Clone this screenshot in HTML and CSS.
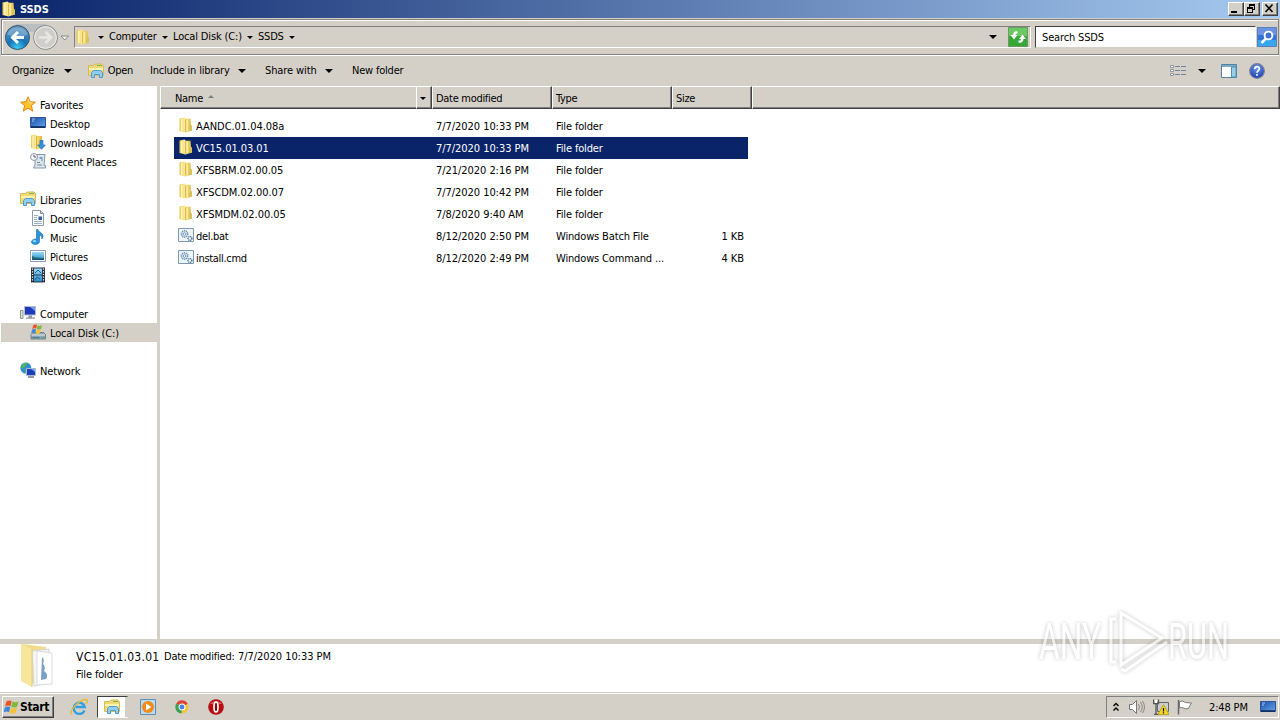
FILE: index.html
```
<!DOCTYPE html>
<html lang="en">
<head>
    <meta charset="UTF-8">
    <meta name="viewport" content="width=device-width, initial-scale=1.0">
    <title>SSDS</title>
    <link rel="stylesheet" href="styles.css">
</head>
<body>
    <svg class="defs" width="0" height="0">
        <defs>
            <linearGradient id="gold" x1="0" x2="1" y1="0" y2="0">
                <stop offset="0" stop-color="#e9c95a"/>
                <stop offset=".4" stop-color="#fbe992"/>
                <stop offset="1" stop-color="#dfb640"/>
            </linearGradient>
            <linearGradient id="screen" x1="0" x2="1" y1="0" y2="1">
                <stop offset="0" stop-color="#1c4fa8"/>
                <stop offset="1" stop-color="#64a5ec"/>
            </linearGradient>
            <linearGradient id="sky" x1="0" x2="0" y1="0" y2="1">
                <stop offset="0" stop-color="#9adcf8"/>
                <stop offset="1" stop-color="#2a8cc8"/>
            </linearGradient>
            <radialGradient id="back" cx=".5" cy=".95" r=".9">
                <stop offset="0" stop-color="#3fd0f5"/>
                <stop offset=".45" stop-color="#1673b4"/>
                <stop offset="1" stop-color="#5f93bd"/>
            </radialGradient>
            <radialGradient id="help" cx=".5" cy=".3" r=".7">
                <stop offset="0" stop-color="#6f9bec"/>
                <stop offset="1" stop-color="#1b3cab"/>
            </radialGradient>
        </defs>
        <symbol id="folder" viewBox="0 0 16 16">
            <path d="M1.500 1.500l5-1 1.500 1.300h4.500l.5 6 1 1v4.700L7.500 15.500l-6-1.500z" fill="url(#gold)"/>
            <path d="M3.800 2v12" stroke="#fff6bd" stroke-width="1.500"/>
            <path d="M7.500 2.500v12" stroke="#d0a63a" stroke-width=".7"/>
            <path d="M9.300 3v11" stroke="#faeca0" stroke-width="1.500"/>
            <path d="M11 9.500l3-.7v4.700l-3 .8z" fill="#d6c35c"/>
        </symbol>
        <symbol id="library" viewBox="0 0 16 16">
            <path d="M.5 2.500h5l1.500-1.500h7l1.500 2v9.500H.5z" fill="#f3d971" stroke="#d9b95a"/>
            <path d="M1 5h14v2H1z" fill="#fff3b4"/>
            <path d="M9 2.500h5" stroke="#6bbd5b"/>
            <path d="M3.500 14.500V9.500l2-2h7l2 2v5h-3v-3h-5v3z" fill="#8fcdf2" stroke="#4f9dd0"/>
        </symbol>
        <symbol id="star" viewBox="0 0 16 16">
            <path d="M8 .8l2.100 5 5.300.4-4 3.500 1.300 5.400L8 12.200l-4.700 2.900 1.300-5.400-4-3.500 5.300-.4z" fill="#ffc32e" stroke="#e48312"/>
            <path d="M8 3l1.300 3.800 3.200.3" fill="none" stroke="#ffe898"/>
        </symbol>
        <symbol id="desktop" viewBox="0 0 16 16">
            <path d="M.5 2.500h15v10H.5z" fill="url(#screen)" stroke="#2d5596"/>
            <path d="M1 12h14" stroke="#0b2453" stroke-width="1.500"/>
            <path d="M2 4h3M2 6h2" stroke="#a8c9f3"/>
        </symbol>
        <symbol id="downloads" viewBox="0 0 16 16">
            <path d="M1 1.500l5-1 1 1.500h5v12L6 15.500 1 14z" fill="url(#gold)"/>
            <path d="M3 2v12" stroke="#fff6bd" stroke-width="1.300"/>
            <path d="M6.500 2v12.500" stroke="#d0a63a" stroke-width=".8"/>
            <path d="M10 6.500h3V11h2.300l-3.800 4.300L7.700 11H10z" fill="#3596df" stroke="#166ab0" stroke-width=".7"/>
        </symbol>
        <symbol id="recent" viewBox="0 0 16 16">
            <path d="M5 1.500h10l-1 11h1.500v2.500H3.500L5 12z" fill="#dfe6eb" stroke="#8798a8"/>
            <path d="M7 9.500h3M7 12h5M11 7h2" stroke="#6a88a5"/>
            <path d="M9.500 4h3v2h-3z" fill="#6aa0cb"/>
            <circle cx="4" cy="4" r="3.500" fill="#f6f8fa" stroke="#8899aa"/>
            <path d="M4 2v2h2" fill="none" stroke="#556"/>
        </symbol>
        <symbol id="documents" viewBox="0 0 16 16">
            <path d="M2.500.5h8l3 3v12h-11z" fill="#fbfdff" stroke="#8d9aa8"/>
            <path d="M10.500.5v3h3" fill="#ccd8e2" stroke="#7f8d9c"/>
            <path d="M4 5.500h4M4 7.500h3M4 9.500h3M4 11.500h8M4 13.500h8" stroke="#9db0c6"/>
            <path d="M8.500 6.500H12V10H8.500z" fill="#345c9c"/>
        </symbol>
        <symbol id="music" viewBox="0 0 16 16">
            <path d="M8 .5c.5 3 5 3 5 6.500 0 1.500-.6 2.500-1.200 3 .4-2.500-1-3.600-2.300-4v6.500c0 2-2 3-4.300 3C3 15.500 1.500 14.500 1.500 13c0-2 2.500-3.500 5-3V.5z" fill="#2994d8" stroke="#176fae" stroke-width=".6"/>
            <ellipse cx="4.500" cy="12.200" rx="1.800" ry="1.100" fill="#8fd3f6"/>
        </symbol>
        <symbol id="pictures" viewBox="0 0 16 16">
            <path d="M.5 2.500h15v11H.5z" fill="#fff" stroke="#8e9ba8"/>
            <path d="M2 4h12v8H2z" fill="url(#sky)"/>
            <path d="M2 8l4 1.500 8 .5v2H2z" fill="#1e6d70"/>
            <path d="M2 11h12v1H2z" fill="#124a86"/>
        </symbol>
        <symbol id="videos" viewBox="0 0 16 16">
            <path d="M1 .5h14v15H1z" fill="#26303c"/>
            <path d="M4 1.500h8v6H4zM4 8.500h8v6H4z" fill="url(#sky)"/>
            <path d="M2.500 1.500v14M13.500 1.500v14" stroke="#fff" stroke-width="1.200" stroke-dasharray="1.200 1.500"/>
            <path d="M5 6l3-3 3 3M5 13l2-3 3 2" fill="none" stroke="#1f5d94"/>
        </symbol>
        <symbol id="computer" viewBox="0 0 16 16">
            <path d="M.5 5.500h2.500v8H.5z" fill="#dde1de" stroke="#8f9891"/>
            <path d="M4.500 1.500h11v8.500h-11z" fill="#1c38bb" stroke="#b3bccb"/>
            <path d="M10 2h5v4z" fill="#7794f3"/>
            <path d="M8.500 10.500h3.500v2H15v1.300H6v-1.300h2.500z" fill="#8c96a5"/>
        </symbol>
        <symbol id="flag" viewBox="0 0 16 16">
            <path d="M2.500 2.500C4.500 1 6 1.200 7.700 2.200L6.500 7.200C4.800 6.200 3.200 6.300 1 7.500z" fill="#ea5425"/>
            <path d="M8.600 2.600c2 1 3.800 1 6-.3l-1.400 5.200c-2 1.200-4 1.200-5.900.200z" fill="#7cb83a"/>
            <path d="M.8 8.500c2-1.200 3.800-1.300 5.500-.300l-1.300 5c-1.800-1-3.300-.900-5.400.300z" fill="#3c88d6"/>
            <path d="M7.100 8.700c2 1 3.900.900 6-.300l-1.400 5.100c-2 1.300-4 1.200-5.900.200z" fill="#f9c22d"/>
        </symbol>
        <symbol id="disk" viewBox="0 0 16 16">
            <path d="M1 10.500l2-2h10.500l2 2v4.500H1z" fill="#8fa5b3" stroke="#61727e" stroke-width=".8"/>
            <path d="M1.500 11h13.500" stroke="#e7eef2"/>
            <path d="M12.500 13.500h2" stroke="#45b04a"/>
            <path d="M2.500 13.500h7" stroke="#3f7f9d"/>
            <use href="#flag" x="1" y="-.5" width="12.500" height="11.500"/>
        </symbol>
        <symbol id="network" viewBox="0 0 16 16">
            <circle cx="5.800" cy="6" r="5.500" fill="#2f8fd2"/>
            <path d="M2 3c2-2.500 5-2.500 6-2-1 1.500-2 1-2.500 3L3 6.500 1 6zM5 7l3 1-1 3.200-2-.5z" fill="#54b64e"/>
            <path d="M6.500 6.500h9v7h-9z" fill="#1b3fb8" stroke="#a9bcd4"/>
            <path d="M11 7h4v3z" fill="#7fa2f3"/>
            <path d="M8 15h6" stroke="#6e7b8b" stroke-width="1.500"/>
        </symbol>
        <symbol id="batch" viewBox="0 0 16 16">
            <path d="M.5 1.500h15v13H.5z" fill="#eff6fb" stroke="#7d98b0"/>
            <circle cx="6.500" cy="7" r="3.200" fill="#dfeaf3" stroke="#6c94b8" stroke-width="1.500" stroke-dasharray="1.300 .7"/>
            <circle cx="6.500" cy="7" r="1.300" fill="#fff" stroke="#5c87ad" stroke-width=".8"/>
            <circle cx="12" cy="11.500" r="1.900" fill="#fff" stroke="#426e9a" stroke-width="1.400" stroke-dasharray="1.100 .5"/>
        </symbol>
    </svg>

    <div class="titlebar">
        <svg class="icon"><use href="#folder"/></svg>
        <span class="title">SSDS</span>
        <div class="window-buttons">
            <div class="wbtn"><svg viewBox="0 0 12 11"><path d="M2 8h6v2H2z"/></svg></div>
            <div class="wbtn"><svg viewBox="0 0 12 11"><path d="M4 1h6v2H4zM4 3h1v1H4zM9 3h1v4H8V6h1zM2 4h6v2H2zM2 6h1v4H2zM7 6h1v4H7zM2 9h6v1H2z"/></svg></div>
            <div class="wbtn close"><svg viewBox="0 0 12 11"><path d="M2.500 1.500l7 7.500M9.500 1.500l-7 7.500" stroke="#000" stroke-width="1.700"/></svg></div>
        </div>
    </div>

    <div class="navbar">
        <svg class="nav-buttons" viewBox="0 0 70 30" width="70" height="30">
            <path d="M14 3h30v8H14z" fill="#b9bec1"/>
            <circle cx="15.500" cy="16.500" r="12" fill="url(#back)" stroke="#39546c"/>
            <path d="M5 13.500a11 10 0 0 1 21 0q-10 5-21 0z" fill="#fff" opacity=".25"/>
            <path d="M22 16.500H11.500M16 11l-5.500 5.500L16 22" fill="none" stroke="#fff" stroke-width="3"/>
            <circle cx="43.500" cy="16.500" r="12" fill="#d0cecb" stroke="#8b8b8b"/>
            <circle cx="43.500" cy="16.500" r="10.800" fill="none" stroke="#efefed"/>
            <path d="M37 16.500h10M43.500 11l5.500 5.500-5.500 5.500" fill="none" stroke="#e9e7e4" stroke-width="2.600"/>
            <path d="M59 15h7.500l-3.700 4z" fill="#f6f5f2" stroke="#888"/>
        </svg>
        <div class="address">
            <svg class="icon"><use href="#folder"/></svg>
            <i class="arrow small first"></i>
            <span class="crumb computer">Computer</span><i class="arrow small"></i>
            <span class="crumb drive">Local Disk (C:)</span><i class="arrow small"></i>
            <span class="crumb here">SSDS</span><i class="arrow small"></i>
            <i class="arrow history"></i>
            <svg class="refresh" viewBox="0 0 20 20" width="20" height="20">
                <path d="M.5.500h19v19H.5z" fill="#35a836" stroke="#6a9a60"/>
                <path d="M1 1h18v8H1z" fill="#6bc865"/>
                <path d="M9.500 4.500q-4-1-4.500 3.500H2.500l3.500 4.500L9.500 8H7.500q0-1.800 2-1.500zM10.500 15.500q4.500 1 5-3.500H18l-3.500-4.500L11 12h2q0 1.800-2.500 1.500z" fill="#fff"/>
            </svg>
        </div>
        <div class="search">Search SSDS</div>
        <svg class="search-button" viewBox="0 0 20 20" width="20" height="20">
            <path d="M.5.500h19v19H.5z" fill="#2f73d8" stroke="#5c7fb8"/>
            <path d="M1 1h18v7H1z" fill="#6d92e4"/>
            <path d="M1 13h18v6H1z" fill="#38a5ee"/>
            <path d="M9 11.500L4.500 16" stroke="#fff" stroke-width="2.500"/>
            <circle cx="11.500" cy="8.500" r="3.900" fill="#3f70cf" stroke="#fff" stroke-width="1.900"/>
        </svg>
    </div>

    <div class="toolbar">
        <div class="tool organize">Organize<i class="arrow"></i></div>
        <div class="tool open"><svg class="icon"><use href="#library"/></svg>Open</div>
        <div class="tool include">Include in library<i class="arrow"></i></div>
        <div class="tool share">Share with<i class="arrow"></i></div>
        <div class="tool new">New folder</div>
        <div class="views">
            <svg viewBox="0 0 16 14" width="16" height="14">
                <path d="M.5 1.500h3v2h-3zM.5 5.500h3v2h-3zM.5 9.500h3v2h-3z" fill="#fff" stroke="#8a93a0"/>
                <path d="M5 2.500h5M11 2.500h5M5 6.500h5M11 6.500h5M5 10.500h5M11 10.500h5" stroke="#71849a"/>
            </svg>
            <i class="arrow"></i>
            <svg class="preview" viewBox="0 0 16 14" width="16" height="14">
                <path d="M.5.500h15v13H.5z" fill="#fff" stroke="#54809f"/>
                <path d="M1 2h14" stroke="#4c93b8" stroke-width="1.500"/>
                <path d="M10.500 3h4.500v10h-4.500z" fill="#9acfe8" stroke="#4c93b8"/>
            </svg>
            <svg class="help" viewBox="0 0 16 16" width="16" height="16">
                <circle cx="8" cy="8" r="7.300" fill="url(#help)" stroke="#76819d" stroke-width="1.200"/>
                <path d="M5.700 6c0-3.200 4.900-3 4.700-.2C10.300 7.500 8 7.700 8 9.800M8 11v1.800" fill="none" stroke="#fff" stroke-width="1.700"/>
            </svg>
        </div>
    </div>

    <div class="content">
        <div class="sidebar">
            <div class="group">
                <div class="node root"><svg class="icon"><use href="#star"/></svg>Favorites</div>
                <div class="node"><svg class="icon"><use href="#desktop"/></svg>Desktop</div>
                <div class="node"><svg class="icon"><use href="#downloads"/></svg>Downloads</div>
                <div class="node"><svg class="icon"><use href="#recent"/></svg>Recent Places</div>
            </div>
            <div class="group">
                <div class="node root"><svg class="icon"><use href="#library"/></svg>Libraries</div>
                <div class="node"><svg class="icon"><use href="#documents"/></svg>Documents</div>
                <div class="node"><svg class="icon"><use href="#music"/></svg>Music</div>
                <div class="node"><svg class="icon"><use href="#pictures"/></svg>Pictures</div>
                <div class="node"><svg class="icon"><use href="#videos"/></svg>Videos</div>
            </div>
            <div class="group">
                <div class="node root"><svg class="icon"><use href="#computer"/></svg>Computer</div>
                <div class="node current"><svg class="icon"><use href="#disk"/></svg>Local Disk (C:)</div>
            </div>
            <div class="group">
                <div class="node root"><svg class="icon"><use href="#network"/></svg>Network</div>
            </div>
        </div>

        <div class="files">
            <div class="columns">
                <div class="col name">Name<i class="sort"></i></div>
                <div class="col drop"><i class="arrow small"></i></div>
                <div class="col">Date modified</div>
                <div class="col">Type</div>
                <div class="col size">Size</div>
                <div class="col rest"></div>
            </div>
            <div class="rows">
                <div class="row"><svg class="icon"><use href="#folder"/></svg><span>AANDC.01.04.08a</span><span>7/7/2020 10:33 PM</span><span class="type">File folder</span></div>
                <div class="row selected"><svg class="icon"><use href="#folder"/></svg><span>VC15.01.03.01</span><span>7/7/2020 10:33 PM</span><span class="type">File folder</span></div>
                <div class="row"><svg class="icon"><use href="#folder"/></svg><span>XFSBRM.02.00.05</span><span>7/21/2020 2:16 PM</span><span class="type">File folder</span></div>
                <div class="row"><svg class="icon"><use href="#folder"/></svg><span>XFSCDM.02.00.07</span><span>7/7/2020 10:42 PM</span><span class="type">File folder</span></div>
                <div class="row"><svg class="icon"><use href="#folder"/></svg><span>XFSMDM.02.00.05</span><span>7/8/2020 9:40 AM</span><span class="type">File folder</span></div>
                <div class="row"><svg class="icon"><use href="#batch"/></svg><span class="file">del.bat</span><span>8/12/2020 2:50 PM</span><span class="type">Windows Batch File</span><span class="kb">1 KB</span></div>
                <div class="row"><svg class="icon"><use href="#batch"/></svg><span class="file">install.cmd</span><span>8/12/2020 2:49 PM</span><span class="type">Windows Command ...</span><span class="kb">4 KB</span></div>
            </div>
        </div>
    </div>

    <div class="details">
        <svg class="big-folder" viewBox="0 0 36 46" width="36" height="46">
            <path d="M3 1l23 3v6L12 43 3 38z" fill="#f0dc8d"/>
            <path d="M12 8l17-2v34l-15 3z" fill="#f4f4f2" stroke="#d3d5d8"/>
            <path d="M17 8l15 2v31l-15 1z" fill="#fff" stroke="#dadcdf"/>
            <path d="M22 14q3 2 1 7 3 3 1 7 5 3 2 8l-5 1z" fill="#7b9fc6"/>
            <path d="M1 0l11 7v37L1 38z" fill="#f8e69c"/>
            <path d="M12 7v37" stroke="#e3ce7f"/>
        </svg>
        <div class="info">
            <div class="line"><span class="picked">VC15.01.03.01</span><span class="label">Date modified:</span><span class="stamp">7/7/2020 10:33 PM</span></div>
            <div class="line kind">File folder</div>
        </div>
    </div>

    <div class="taskbar">
        <div class="start"><svg class="icon"><use href="#flag"/></svg><span>Start</span></div>
        <div class="task">
            <svg viewBox="0 0 18 18" width="18" height="18">
                <path d="M14.500 12.500a5.600 5.600 0 1 1 .3-3.500H5.500" fill="none" stroke="#31a0e2" stroke-width="2.300"/>
                <path d="M1.500 16.500C-1 12 10 1 16.500 1.500c1.500.5.5 3-.5 4.500" fill="none" stroke="#edb92e" stroke-width="1.400"/>
            </svg>
        </div>
        <div class="task active"><svg class="icon"><use href="#library"/></svg></div>
        <div class="task">
            <svg viewBox="0 0 16 16" width="16" height="16">
                <path d="M.5.500h15v15H.5z" fill="#b9dbf2" stroke="#5d8fb8"/>
                <circle cx="8" cy="8" r="6" fill="#f28a18"/>
                <path d="M6 4.500l5.500 3.500L6 11.500z" fill="#fff"/>
            </svg>
        </div>
        <div class="task">
            <svg viewBox="0 0 16 16" width="14" height="14">
                <path d="M8 8L1.500 4A7.500 7.500 0 0 1 14.600 4.500z" fill="#dd4534"/>
                <path d="M8 8l6.600-3.500A7.500 7.500 0 0 1 7.500 15.500z" fill="#f6c52e"/>
                <path d="M8 8l-.5 7.500A7.500 7.500 0 0 1 1.500 4z" fill="#3da352"/>
                <circle cx="8" cy="8" r="3.400" fill="#4284ea" stroke="#fff" stroke-width="1.200"/>
            </svg>
        </div>
        <div class="task">
            <svg viewBox="0 0 16 16" width="16" height="16">
                <circle cx="8" cy="8" r="7.800" fill="#b70d12"/>
                <path d="M2 5a7 6 0 0 1 12 0z" fill="#dd5a55"/>
                <ellipse cx="8" cy="8" rx="2" ry="5" fill="#8d090d" stroke="#fff" stroke-width="1.700"/>
            </svg>
        </div>
        <div class="tray">
            <svg viewBox="0 0 8 10" width="8" height="10"><path d="M1.500 4L4 1.500 6.500 4M1.500 8.500L4 6l2.500 2.500" fill="none" stroke="#000" stroke-width="1.400"/></svg>
            <svg class="sound" viewBox="0 0 16 16" width="16" height="16">
                <path d="M.5 5.500h3l4-4v13l-4-4h-3z" fill="#fff" stroke="#777"/>
                <path d="M9.500 5q2 3 0 6M11.500 3q3.500 5 0 10M13.500 2q4 6 0 12" fill="none" stroke="#888"/>
            </svg>
            <svg class="net" viewBox="0 0 16 16" width="16" height="16">
                <path d="M4.500 3.500h11v9h-11z" fill="#c9ced1" stroke="#666"/>
                <path d="M.5.500v4h5v-4M3 4.500V15M1 15.500h5" fill="none" stroke="#555" stroke-width="1.300"/>
                <path d="M2 1h2v3H2z" fill="#fff"/>
                <path d="M10.500 5.500L16 15.500H5z" fill="#f8d928" stroke="#b6960d" stroke-width=".8"/>
                <path d="M10.500 9v3.500M10.500 13.300v1.300" stroke="#111" stroke-width="1.300"/>
            </svg>
            <svg class="action" viewBox="0 0 16 16" width="16" height="16">
                <path d="M1.500 1v14.500" stroke="#666" stroke-width="1.500"/>
                <path d="M2.500 2.500q3-1.500 6 1l6 .5q-2 3-3 5.500-3 1-5-.5-2-1-4 0z" fill="#fff" stroke="#777"/>
            </svg>
            <span class="clock">2:48 PM</span>
            <svg class="icon"><use href="#desktop"/></svg>
        </div>
    </div>

    <svg class="watermark" viewBox="0 0 210 74" width="210" height="74">
        <g class="mark">
            <text x="9" y="54" textLength="62" lengthAdjust="spacingAndGlyphs">ANY</text>
            <text x="138" y="54" textLength="61" lengthAdjust="spacingAndGlyphs">RUN</text>
            <path d="M91 8v52l41-27zM86 14h-5v43h5M91 64l4 2 42-29"/>
        </g>
    </svg>
</body>
</html>
```
FILE: styles.css
```
* {
    box-sizing: border-box;
}
body {
    margin: 0;
    width: 1280px;
    height: 720px;
    overflow: hidden;
    display: flex;
    flex-direction: column;
    background: #d4d0c8;
    color: #000;
    font-family: "DejaVu Sans Condensed", "DejaVu Sans", sans-serif;
    font-stretch: condensed;
    font-size: 11px;
    letter-spacing: -0.3px;
    line-height: 14px;
    white-space: nowrap;
}
svg {
    display: block;
    flex: none;
}
.defs {
    position: absolute;
}
.icon {
    width: 16px;
    height: 16px;
}
.arrow {
    border: 4px solid transparent;
    border-top-color: #000;
    border-bottom: 0;
    flex: none;
}
.arrow.small {
    border-width: 3px;
    border-bottom: 0;
}

/* title bar */
.titlebar {
    height: 18px;
    display: flex;
    align-items: center;
    padding: 0 2px 0 1px;
    background: linear-gradient(to right, #0a246a, #a6caf0);
    color: #fff;
    font-weight: bold;
}
.title {
    margin-left: 3px;
    padding-top: 2px;
    letter-spacing: -0.1px;
}
.window-buttons {
    margin-left: auto;
    display: flex;
}
.wbtn {
    width: 16px;
    height: 14px;
    background: #d4d0c8;
    border: 1px solid;
    border-color: #fff #404040 #404040 #fff;
    box-shadow: inset -1px -1px #808080;
}
.wbtn svg {
    width: 12px;
    height: 11px;
}
.wbtn.close {
    margin-left: 2px;
}

/* address row */
.navbar {
    height: 36px;
    margin: 1px 1px 0;
    display: flex;
    border: 1px solid #808080;
    box-shadow: inset 1px 1px #fff, 0 1px #fff;
}
.nav-buttons {
    margin-top: 1px;
}
.address {
    width: 957px;
    height: 22px;
    margin: 6px 0 0 2px;
    display: flex;
    align-items: center;
    border: 1px solid;
    border-color: #808080 #fff #fff #808080;
}
.first {
    margin: 0 5px 0 7px;
}
.crumb.computer {
    width: 53px;
    letter-spacing: -0.2px;
}
.crumb.drive {
    width: 74px;
    margin-left: 5px;
    letter-spacing: -0.15px;
}
.crumb.here {
    width: 31px;
    margin-left: 5px;
    letter-spacing: -0.2px;
}
.history {
    margin-left: auto;
}
.refresh {
    margin: 0 2px 0 11px;
}
.search {
    width: 221px;
    height: 22px;
    margin: 6px 1px 0 4px;
    padding: 4px 6px 0;
    background: #fff;
    border: 1px solid;
    border-color: #404040 #fff #d4d0c8 #404040;
    letter-spacing: -0.15px;
}
.search-button {
    margin-top: 7px;
}

/* command bar */
.toolbar {
    height: 31px;
    display: flex;
    align-items: center;
    padding-left: 12px;
}
.tool {
    display: flex;
    align-items: center;
    justify-content: space-between;
}
.organize {
    width: 60px;
}
.open {
    width: 45px;
    margin-left: 16px;
}
.include {
    width: 96px;
    margin-left: 17px;
    letter-spacing: -0.2px;
}
.share {
    width: 68px;
    margin: 0 19px;
    letter-spacing: -0.1px;
}
.new {
    letter-spacing: -0.2px;
}
.views {
    margin-left: auto;
    display: flex;
    align-items: center;
    padding-right: 15px;
}
.views .arrow {
    margin: 0 15px 0 12px;
}
.help {
    margin-left: 12px;
}

/* navigation tree and file list */
.content {
    height: 553px;
    display: flex;
    background: #fff;
}
.sidebar {
    width: 160px;
    padding-top: 9px;
    border-right: 3px solid #d4d0c8;
    letter-spacing: -0.15px;
}
.group {
    margin-bottom: 19px;
}
.node {
    height: 19px;
    display: flex;
    align-items: center;
    gap: 4px;
    margin-left: 1px;
    padding: 2px 0 0 29px;
}
.node .icon {
    margin-top: -4px;
}
.node.root {
    padding-left: 19px;
}
.node.current {
    background: #d4d0c8;
}
.files {
    flex: 1;
}
.columns {
    height: 23px;
    display: flex;
    background: #d4d0c8;
}
.col {
    width: 120px;
    display: flex;
    align-items: center;
    padding: 2px 0 0 3px;
    border: 1px solid;
    border-color: #fff #404040 #404040 #fff;
    box-shadow: inset -1px -1px #808080;
}
.col.name {
    width: 256px;
    padding-left: 14px;
    border-right: 0;
    box-shadow: inset 0 -1px #808080;
}
.col.drop {
    width: 16px;
}
.col.size {
    width: 80px;
}
.col.rest {
    flex: 1;
}
.sort {
    margin: -5px 0 0 5px;
    border: 3px solid transparent;
    border-top: 0;
    border-bottom-color: #808080;
}
.rows {
    width: 574px;
    margin: 6px 0 0 14px;
}
.row {
    height: 22px;
    display: grid;
    grid-template-columns: 18px 240px 120px 120px 68px;
    align-items: center;
    padding: 2px 0 0 4px;
    letter-spacing: -0.05px;
}
.row .icon {
    margin-top: -4px;
}
.row.selected {
    background: #0a246a;
    color: #fff;
}
.row .type {
    letter-spacing: -0.15px;
}
.row .file {
    letter-spacing: -0.3px;
}
.kb {
    text-align: right;
}

/* details pane */
.details {
    height: 54px;
    display: flex;
    background: #fff;
    border-top: 5px solid #d4d0c8;
    border-bottom: 1px solid #d4d0c8;
}
.big-folder {
    margin: -1px 0 0 20px;
}
.info {
    margin: 4px 0 0 20px;
}
.line {
    height: 18px;
    display: flex;
    align-items: center;
}
.picked {
    width: 88px;
    font-size: 12px;
    letter-spacing: 0.25px;
}
.label {
    width: 74px;
    letter-spacing: -0.2px;
}
.stamp {
    letter-spacing: -0.05px;
}
.kind {
    letter-spacing: -0.15px;
}

/* taskbar */
.taskbar {
    height: 27px;
    display: flex;
    align-items: center;
    border-top: 1px solid #fff;
    padding: 0 1px 0 2px;
}
.start {
    width: 52px;
    height: 22px;
    margin-right: 8px;
    display: flex;
    align-items: center;
    padding-left: 1px;
    font-weight: bold;
    font-size: 12px;
    border: 1px solid;
    border-color: #fff #404040 #404040 #fff;
    box-shadow: inset -1px -1px #808080;
}
.task {
    width: 34px;
    height: 22px;
    display: flex;
    align-items: center;
    justify-content: center;
}
.task.active {
    width: 31px;
    margin: 0 3px 0 1px;
    padding-right: 2px;
    background: #fff;
    border: 1px solid;
    border-color: #404040 #d4d0c8 #fff #404040;
    box-shadow: inset -2px 0 #d4d0c8;
}
.tray {
    width: 173px;
    height: 22px;
    margin-left: auto;
    display: flex;
    align-items: center;
    padding-left: 5px;
    border: 1px solid;
    border-color: #808080 #fff #fff #808080;
}
.sound {
    margin-left: 9px;
}
.net {
    margin-left: 8px;
}
.action {
    margin-left: 8px;
}
.clock {
    width: 51px;
    margin-left: 16px;
    padding-top: 2px;
    letter-spacing: -0.15px;
}

/* overlay logo */
.watermark {
    position: absolute;
    left: 1030px;
    top: 605px;
    overflow: visible;
}
.mark {
    fill: none;
    stroke: #fff;
    stroke-width: 3;
    opacity: 0.6;
    filter: drop-shadow(0 0 2px rgba(0, 0, 0, 0.4));
}
.mark text {
    font: 50px Roboto, sans-serif;
    letter-spacing: 0;
    fill: #fff;
    stroke: none;
}
```
